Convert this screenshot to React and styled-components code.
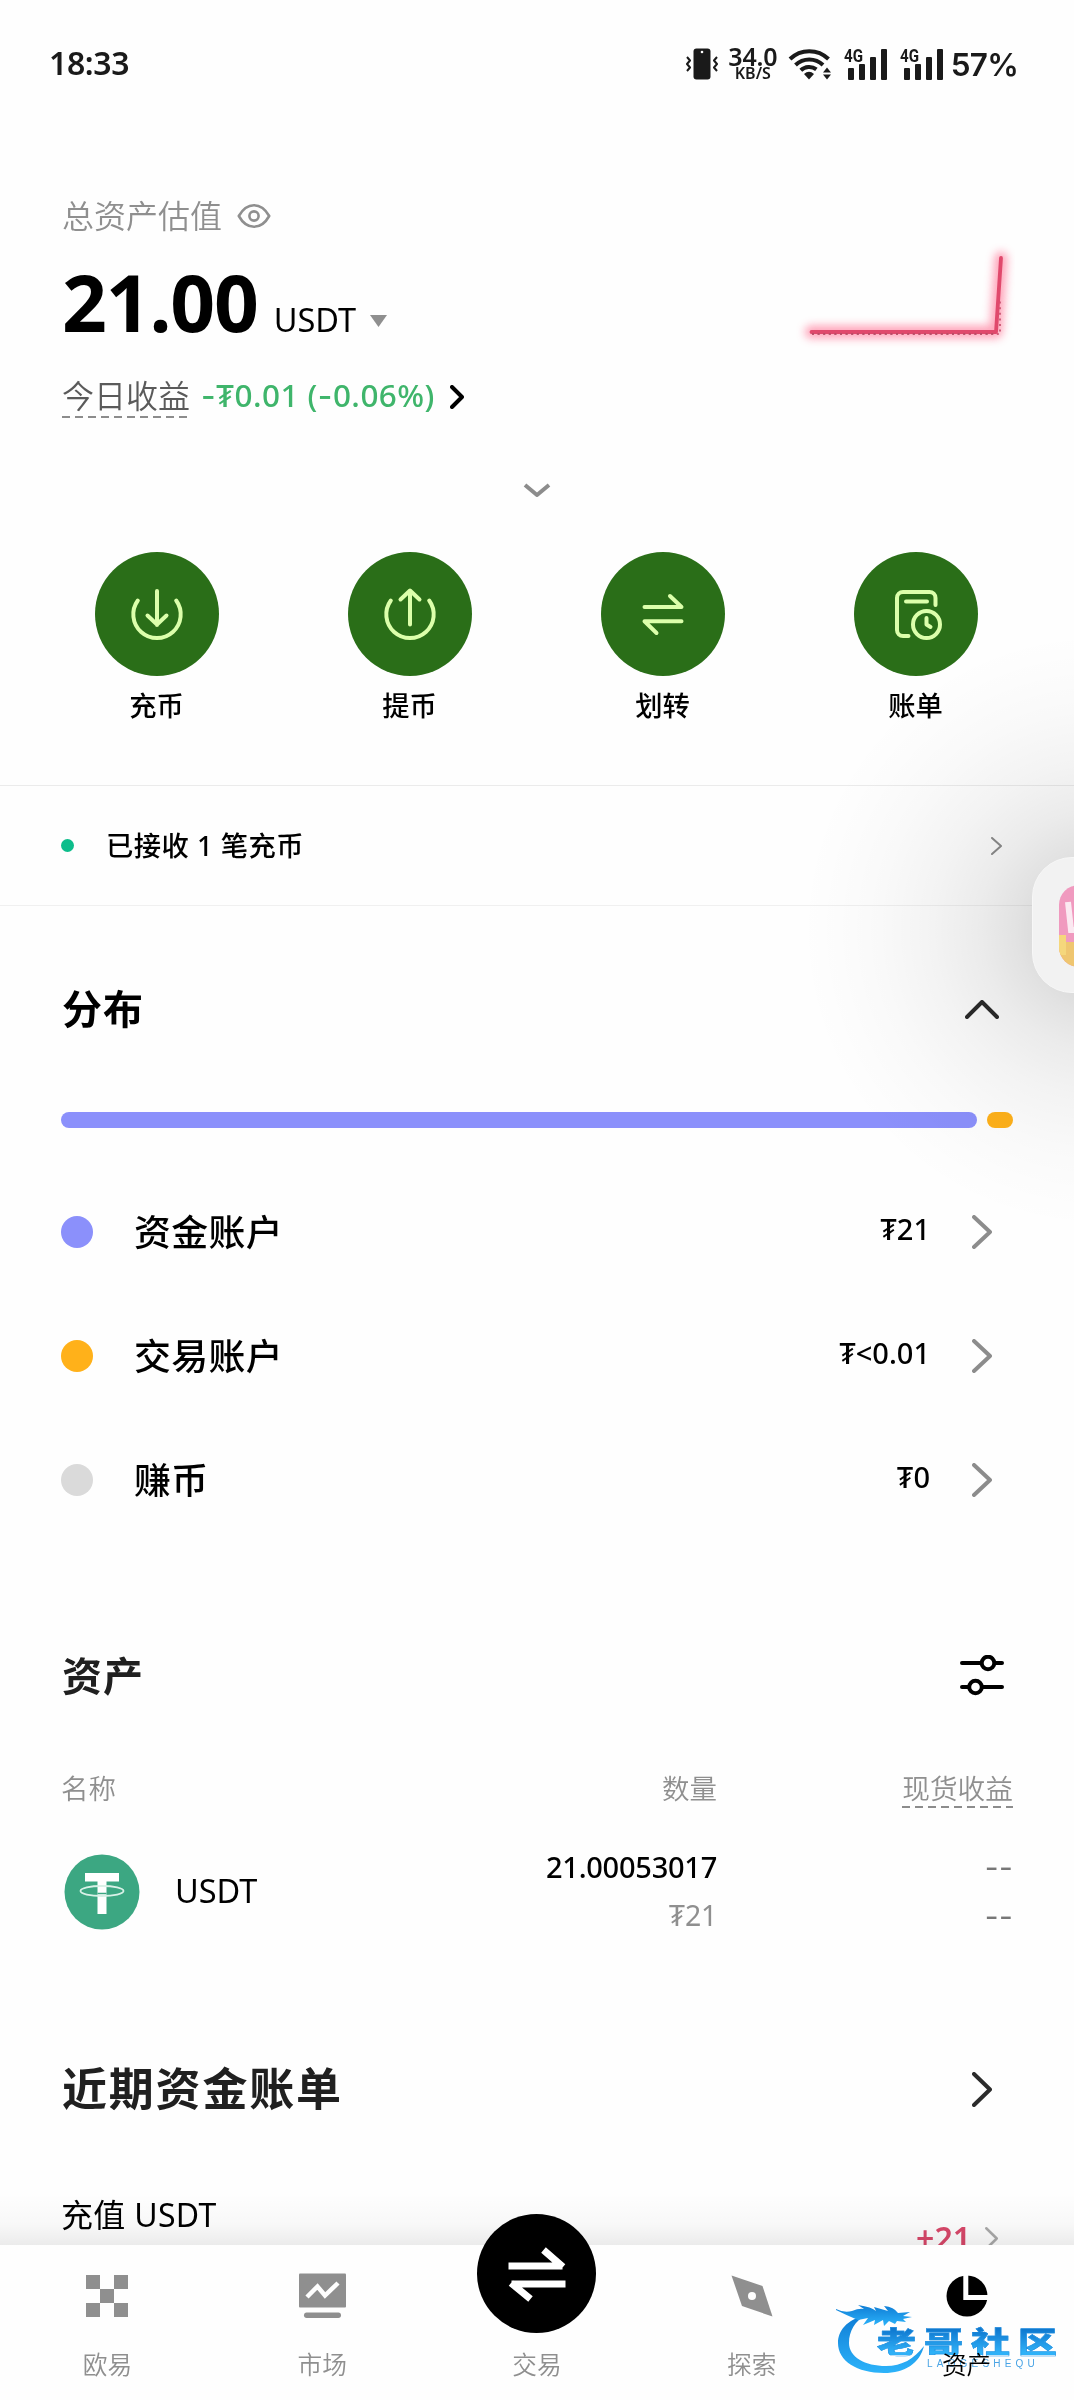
import React from 'react'
import styled, { createGlobalStyle } from 'styled-components'

const GlobalStyle = createGlobalStyle`
    * { box-sizing: border-box; }
    body {
        margin: 0;
        background: #fefefe;
        color: #000;
        font-family: "Noto Sans", "Noto Sans CJK SC", sans-serif;
    }
    svg { display: block; flex: none; }
`

const Screen = styled.div`
    position: relative;
    width: 1074px;
    height: 2400px;
    overflow: hidden;
    display: flex;
    flex-direction: column;
    background: #fefefe;
`
const StatusBar = styled.div`
    height: 128px;
    flex: none;
    padding: 0 56px 0 49px;
    display: flex;
    align-items: center;
    justify-content: space-between;
    color: #1a1a1a;
`
const Clock = styled.span`
    font-size: 32px;
    font-weight: 600;
    line-height: 40px;
    letter-spacing: -0.4px;
    padding-bottom: 2px;
`
const StatusIcons = styled.div`
    display: flex;
    align-items: center;
`
const NetSpeed = styled.div`
    width: 50px;
    margin: 0 10px;
    display: flex;
    flex-direction: column;
    align-items: center;
    font-weight: 600;
`
const SpeedValue = styled.span`
    font-size: 25px;
    line-height: 18px;
    letter-spacing: -0.2px;
`
const SpeedUnit = styled.span`
    font-size: 16px;
    line-height: 16px;
`
const Battery = styled.span`
    margin-left: 5px;
    font-family: Inter, sans-serif;
    font-size: 31.5px;
    font-weight: 600;
    line-height: 40px;
    letter-spacing: -0.8px;
    padding-top: 2px;
`

const Overview = styled.section`
    height: 289px;
    flex: none;
    padding: 0 59px 0 62px;
    display: flex;
    justify-content: space-between;
`
const Summary = styled.div`
    padding-top: 68px;
`
const Row = styled.div`
    display: flex;
    align-items: center;
`
const Label = styled.span`
    font-size: 32px;
    line-height: 40px;
    font-weight: 350;
    color: #8f8f8f;
    margin-right: 15px;
`
const AmountRow = styled.div`
    display: flex;
    align-items: baseline;
    margin-top: 18px;
    height: 96px;
`
const Amount = styled.span`
    font-size: 78.5px;
    line-height: 96px;
    font-weight: 700;
    letter-spacing: -1.2px;
`
const Unit = styled.span`
    font-size: 32.5px;
    margin: 0 14px 0 16px;
`
const PnlRow = styled(Row)`
    margin-top: 25px;
`
const Dashed = styled.span`
    display: inline-block;
    font-size: ${p => p.$size}px;
    font-weight: 350;
    line-height: ${p => p.$leading || 40}px;
    color: ${p => p.$color};
    padding-bottom: ${p => 42 - (p.$leading || 40)}px;
    background: repeating-linear-gradient(to right, #8c8c8c 0 8px, transparent 8px 13px) left ${p => p.$line}px / 100% 2px no-repeat;
`
const Pnl = styled.span`
    margin: 0 15px 0 11px;
    padding-bottom: 2px;
    font-size: 31.5px;
    font-weight: 500;
    line-height: 40px;
    letter-spacing: 0.45px;
    color: #3fb56b;
`
const Wide = styled.span`
    font-family: Inter, sans-serif;
`
const Trend = styled.svg`
    margin-top: 112px;
`
const Expand = styled.div`
    height: 135px;
    flex: none;
    padding-top: 10px;
    display: flex;
    align-items: center;
    justify-content: center;
`

const Actions = styled.div`
    display: grid;
    grid-template-columns: repeat(4, 1fr);
    padding: 0 32px 0 30px;
    flex: none;
`
const Action = styled.div`
    display: flex;
    flex-direction: column;
    align-items: center;
    gap: 12px;
    font-size: 27.3px;
    font-weight: 450;
    line-height: 36px;
`
const ActionCircle = styled.div`
    width: 124px;
    height: 124px;
    border-radius: 50%;
    background: #2a6e18;
    display: flex;
    align-items: center;
    justify-content: center;
`

const Notice = styled.div`
    height: 121px;
    flex: none;
    margin-top: 61px;
    padding: 0 72px 0 61px;
    border-top: 1px solid #ebebeb;
    border-bottom: 1px solid #f0f0f0;
    display: flex;
    align-items: center;
    font-size: 27.3px;
    font-weight: 500;
`
const NoticeText = styled.span`
    flex: 1;
    margin-left: 32px;
    padding-bottom: 3px;
    letter-spacing: 0.5px;
`
const Dot = styled.span`
    flex: none;
    width: ${p => p.$size}px;
    height: ${p => p.$size}px;
    border-radius: 50%;
    background: ${p => p.$color};
`

const Section = styled.section`
    flex: none;
    margin-top: ${p => p.$top}px;
    padding: 0 61px;
`
const SectionHead = styled.div`
    height: 60px;
    display: flex;
    align-items: center;
    justify-content: space-between;
    padding: ${p => p.$drop || 0}px ${p => p.$right}px 0 1px;
`
const Title = styled.h2`
    margin: 0;
    font-size: ${p => p.$size || 40}px;
    font-weight: 700;
    line-height: 60px;
    letter-spacing: ${p => p.$track || 1}px;
    color: ${p => p.$color || '#000'};
`
const Bars = styled.div`
    display: flex;
    gap: 10px;
    height: 16px;
    margin: 74px 0 42px;
`
const Bar = styled.div`
    border-radius: 8px;
    background: ${p => p.$color};
    flex: ${p => p.$grow ? '1' : 'none'};
    width: 26px;
`
const Account = styled.div`
    height: 124px;
    display: flex;
    align-items: center;
    padding-right: 21px;
`
const AccountName = styled.span`
    flex: 1;
    margin-left: 41px;
    padding-bottom: 4px;
    font-size: 36.9px;
    font-weight: 450;
    letter-spacing: 0.4px;
`
const AccountValue = styled.span`
    font-size: 29px;
    font-weight: 500;
    padding-bottom: 8px;
    margin-right: 42px;
`

const TableRow = styled.div`
    display: grid;
    grid-template-columns: 1fr 300px 296px;
`
const TableHead = styled(TableRow)`
    height: 40px;
    margin: 63px 0 34px;
    font-size: 27.5px;
    font-weight: 350;
    line-height: 40px;
    color: #8f8f8f;
`
const Cell = styled.div`
    display: flex;
    flex-direction: column;
    align-items: flex-end;
    font-size: 29px;
    font-weight: ${p => p.$strong ? 500 : 400};
    line-height: 48px;
    letter-spacing: -0.25px;
`
const HeadCell = styled.div`
    text-align: right;
`
const Coin = styled.div`
    display: flex;
    align-items: center;
    gap: 35px;
    padding: 0 0 1px 3px;
    font-size: 32.5px;
`
const CoinName = styled.span`
    padding-bottom: 2px;
`
const Muted = styled.span`
    color: #8f8f8f;
    font-weight: 400;
    font-size: 28.5px;
`
const Dash = styled.span`
    font-family: Inter, sans-serif;
    font-size: 30px;
    line-height: 49px;
    letter-spacing: 0.3px;
    color: #777;
`
const Entry = styled.div`
    height: 86px;
    margin-top: 76px;
    display: flex;
    align-items: center;
    padding-right: 15px;
`
const EntryName = styled.span`
    flex: 1;
    align-self: flex-start;
    font-size: 32px;
    line-height: 40px;
    letter-spacing: 0.3px;
`
const EntryAmount = styled.span`
    font-size: 32px;
    font-weight: 600;
    color: #d9486a;
    margin-right: 14px;
    padding-bottom: 1px;
`

const TabBar = styled.nav`
    position: absolute;
    left: 0;
    right: 0;
    bottom: 0;
    height: 155px;
    background: #fefefe;
    display: flex;
    &::before {
        content: '';
        position: absolute;
        left: 0;
        right: 0;
        top: -52px;
        height: 52px;
        background: linear-gradient(to bottom, rgba(0,0,0,0), rgba(0,0,0,0.025) 60%, rgba(0,0,0,0.075));
    }
`
const Tab = styled.div`
    flex: 1;
    z-index: 1;
    padding-top: 26px;
    display: flex;
    flex-direction: column;
    align-items: center;
`
const TabIcon = styled.div`
    height: 50px;
    display: flex;
    align-items: center;
`
const TabLabel = styled.span`
    margin-top: 29px;
    font-size: 24.7px;
    font-weight: 350;
    line-height: 30px;
    color: ${p => p.$active ? '#000' : '#8f8f8f'};
`
const TradeButton = styled.div`
    width: 119px;
    height: 119px;
    margin: -57px 0 -12px;
    border-radius: 50%;
    background: #000;
    display: flex;
    align-items: center;
    justify-content: center;
`

const Glow = styled.div`
    position: absolute;
    left: 800px;
    top: 630px;
    width: 600px;
    height: 600px;
    background: radial-gradient(closest-side, rgba(0,0,0,0.14) 20%, rgba(0,0,0,0.11) 28%, rgba(0,0,0,0.075) 40%, rgba(0,0,0,0.044) 56%, rgba(0,0,0,0.02) 74%, rgba(0,0,0,0.007) 88%, rgba(0,0,0,0) 100%);
    pointer-events: none;
`
const Floating = styled.div`
    position: absolute;
    left: 1032px;
    top: 857px;
    width: 136px;
    height: 136px;
    border-radius: 40px;
    border: 1px solid #f7f7f7;
    background: #f2f2f2;
    padding: 27px 26px;
`
const AppIcon = styled.div`
    width: 82px;
    height: 82px;
    border-radius: 20px;
    overflow: hidden;
`
const Watermark = styled.div`
    position: absolute;
    left: 832px;
    top: 2300px;
    width: 240px;
    height: 80px;
    z-index: 2;
    mix-blend-mode: multiply;
`
const MarkRing = styled.svg`
    position: absolute;
    left: 0;
    top: 0;
`
const MarkName = styled.span`
    position: absolute;
    left: 45px;
    top: 20px;
    font-family: "Noto Sans CJK SC", sans-serif;
    font-size: 39px;
    font-weight: 900;
    line-height: 40px;
    letter-spacing: 8px;
    white-space: nowrap;
    transform: scaleY(0.77);
    color: transparent;
    background: linear-gradient(to bottom, #0f78d0 15%, #2fb2f8 90%);
    background-clip: text;
    -webkit-text-stroke: 0.6px #2292e2;
`
const MarkLatin = styled.span`
    position: absolute;
    left: 95px;
    top: 58px;
    font-family: "Liberation Sans", sans-serif;
    font-size: 10px;
    line-height: 12px;
    letter-spacing: 4.2px;
    color: #4aa5e6;
`

const Chevron = ({ w, h, dir = 'right', stroke = 4, color = '#8c8c8c', cap = 'round' }) => {
    const s = stroke / 2
    const points = {
        right: `${s},${s} ${w - s},${h / 2} ${s},${h - s}`,
        up: `${s},${h - s} ${w / 2},${s} ${w - s},${h - s}`,
        down: `${s},${s} ${w / 2},${h - s} ${w - s},${s}`,
    }
    return (
        <svg width={w} height={h} fill="none" stroke={color} strokeWidth={stroke} strokeLinecap={cap} strokeLinejoin="round">
            <polyline points={points[dir]} />
        </svg>
    )
}

const Vibrate = () => (
    <svg width="32" height="32" viewBox="0 0 32 32">
        <rect x="7.5" y="0.5" width="17" height="31" rx="3" fill="#1a1a1a" />
        <circle cx="16" cy="4" r="1.3" fill="#fff" />
        <path d="M1 9l3 3.5-3 3.5 3 3.5-3 3.5M31 9l-3 3.5 3 3.5-3 3.5 3 3.5" fill="none" stroke="#1a1a1a" strokeWidth="2" strokeLinejoin="round" />
    </svg>
)

const Wifi = () => (
    <svg width="46" height="32" viewBox="0 0 46 32" fill="none" stroke="#1a1a1a" strokeWidth="4">
        <path d="M2 11a27.5 27.5 0 0 1 38.5 0" />
        <path d="M7.5 17a19.8 19.8 0 0 1 27.5 0" />
        <path d="M12.8 22.3a12 12 0 0 1 15.6-1" />
        <path d="M16 26q5-4.5 10 0l-5 5.5z" fill="#1a1a1a" stroke="none" />
        <path d="M35 24.5l4-5 4 5zM35 26.5h8l-4 5z" fill="#1a1a1a" stroke="none" />
    </svg>
)

const Signal = () => (
    <svg width="56" height="32" viewBox="0 0 56 32" fill="#1a1a1a" overflow="visible">
        <text x="10" y="14" fontSize="18" fontWeight="700" fontFamily="Roboto, sans-serif" textLength="19" lengthAdjust="spacingAndGlyphs">4G</text>
        <rect x="14" y="20" width="6" height="12" rx="1" />
        <rect x="25" y="16" width="6" height="16" rx="1" />
        <rect x="36" y="9" width="6" height="23" rx="1" />
        <rect x="47" y="1" width="6" height="31" rx="1" />
    </svg>
)

const Eye = () => (
    <svg width="34" height="26" viewBox="0 0 34 26" fill="none" stroke="#8f8f8f" strokeWidth="2.6">
        <path d="M1.8 13C6 5.5 11 2.2 17 2.2S28 5.5 32.2 13C28 20.5 23 23.8 17 23.8S6 20.5 1.8 13z" strokeLinejoin="round" />
        <circle cx="17" cy="13" r="4.6" />
    </svg>
)

const PnlTrend = () => (
    <Trend width="220" height="115" viewBox="795 240 220 115" fill="none">
        <defs>
            <filter id="soft" x="-20%" y="-40%" width="140%" height="180%">
                <feGaussianBlur stdDeviation="4" />
            </filter>
        </defs>
        <polyline points="811,332 996,332 1001,258" stroke="#ff86a3" strokeWidth="13" strokeLinecap="round" strokeLinejoin="round" opacity="0.75" filter="url(#soft)" />
        <path d="M812 334H1000V300" stroke="#d0607c" strokeWidth="2" strokeDasharray="2 3.6" />
        <polyline points="811.5,332 996,332 1001,258" stroke="#e0496c" strokeWidth="3.8" strokeLinecap="round" strokeLinejoin="round" />
        <path d="M812 333.8H996" stroke="#b84d66" strokeWidth="1.8" strokeDasharray="2 3.6" />
    </Trend>
)

const Deposit = () => (
    <svg width="56" height="56" viewBox="0 0 56 56" fill="none" stroke="#dcffab" strokeWidth="4" strokeLinecap="round" strokeLinejoin="round">
        <path d="M8.8 14.5a23.7 23.7 0 1 0 38.4 0" />
        <path d="M28 5v34M18.5 29.5l9.5 9 9.5-9" />
    </svg>
)

const Withdraw = () => (
    <svg width="56" height="56" viewBox="0 0 56 56" fill="none" stroke="#dcffab" strokeWidth="4" strokeLinecap="round" strokeLinejoin="round">
        <path d="M8.8 14.5a23.7 23.7 0 1 0 38.4 0" />
        <path d="M28 38.5V5M18.5 13.5l9.5-9 9.5 9" />
    </svg>
)

const Transfer = () => (
    <svg width="56" height="56" viewBox="0 0 56 56" fill="none" stroke="#dcffab" strokeWidth="4" strokeLinecap="round" strokeLinejoin="round">
        <path d="M9.5 21h37L35 10M46.5 35.3h-37L21.5 47" />
    </svg>
)

const Bills = () => (
    <svg width="56" height="56" viewBox="0 0 56 56" fill="none" stroke="#dcffab" strokeWidth="4" strokeLinecap="round" strokeLinejoin="round">
        <path d="M47.5 19v-7a6 6 0 0 0-6-6H15a6 6 0 0 0-6 6v32a6 6 0 0 0 6 6h5.5" />
        <path d="M18 15.5h21" />
        <circle cx="38.5" cy="38.5" r="13.5" />
        <path d="M38.5 32v6.5l4 2.5" />
    </svg>
)

const Sliders = () => (
    <svg width="44" height="42" viewBox="0 0 44 42" fill="#fefefe" stroke="#000" strokeWidth="4" strokeLinecap="round">
        <path d="M2 8h40M2 32h40" />
        <circle cx="28" cy="8" r="6.3" />
        <circle cx="15.5" cy="32" r="6.3" />
    </svg>
)

const Tether = () => (
    <svg width="76" height="76" viewBox="0 0 76 76">
        <circle cx="38" cy="38" r="37.5" fill="#3ca782" />
        <path d="M21 19h34v8.5H42.5V60h-9V27.5H21z" fill="#fff" />
        <ellipse cx="38" cy="37" rx="21.5" ry="5" fill="none" stroke="#d9f1e7" strokeWidth="1.8" />
        <path d="M33.5 39.5h9" stroke="#3ca782" strokeWidth="1.5" />
    </svg>
)

const OkxIcon = () => (
    <svg width="42" height="42" viewBox="0 0 42 42" fill="#8f8f8f">
        <path d="M0 0h14v14H0zM28 0h14v14H28zM14 14h14v14H14zM0 28h14v14H0zM28 28h14v14H28z" />
    </svg>
)

const MarketIcon = () => (
    <svg width="47" height="46" viewBox="0 0 47 46">
        <rect width="47" height="34" rx="1" y="0.5" fill="#8f8f8f" />
        <rect x="5" y="39.5" width="37" height="5.5" rx="2.7" fill="#8f8f8f" />
        <path d="M8 24l10.5-10.5 7.5 9L39 10" fill="none" stroke="#fefefe" strokeWidth="4.5" />
    </svg>
)

const TradeIcon = () => (
    <svg width="60" height="56" viewBox="0 0 60 56" fill="none" stroke="#fff" strokeWidth="7" strokeLinejoin="bevel">
        <path d="M1.5 20h54M56 21L36.5 4M58.5 38h-54M4 37l19.5 16" />
    </svg>
)

const ExploreIcon = () => (
    <svg width="42" height="42" viewBox="0 0 42 42">
        <path d="M0.5 0.5L31.5 11 41.5 41.5 11 31z" fill="#8f8f8f" />
        <circle cx="21" cy="21" r="4" fill="#fefefe" />
    </svg>
)

const AssetsIcon = () => (
    <svg width="42" height="42" viewBox="0 0 42 42">
        <circle cx="21" cy="21" r="20.5" fill="#000" />
        <path d="M19.8 0v22.5H42" fill="none" stroke="#fefefe" strokeWidth="5" />
    </svg>
)

const actions = [
    { name: '充币', icon: <Deposit /> },
    { name: '提币', icon: <Withdraw /> },
    { name: '划转', icon: <Transfer /> },
    { name: '账单', icon: <Bills /> },
]

const accounts = [
    { name: '资金账户', value: '₮21', color: '#8b90fb' },
    { name: '交易账户', value: '₮<0.01', color: '#ffb11a' },
    { name: '赚币', value: '₮0', color: '#dadada' },
]

const tabs = [
    { name: '欧易', icon: <OkxIcon /> },
    { name: '市场', icon: <MarketIcon /> },
    { name: '交易', trade: true },
    { name: '探索', icon: <ExploreIcon /> },
    { name: '资产', icon: <AssetsIcon />, active: true },
]

const Status = () => (
    <StatusBar>
        <Clock>18:33</Clock>
        <StatusIcons>
            <Vibrate />
            <NetSpeed>
                <SpeedValue>34.0</SpeedValue>
                <SpeedUnit>KB/S</SpeedUnit>
            </NetSpeed>
            <Wifi />
            <Signal />
            <Signal />
            <Battery>57%</Battery>
        </StatusIcons>
    </StatusBar>
)

const FloatingApp = () => (
    <Floating>
        <AppIcon>
            <svg width="82" height="82" viewBox="0 0 82 82">
                <rect width="82" height="82" fill="#f09abf" />
                <path d="M0 50h7v7h75v25H0z" fill="#efc670" />
                <path d="M0 50h7v20H0z" fill="#f5d77c" />
                <path d="M9 17l3 28h12l4-15 4 15h12l8-28" fill="none" stroke="#fbe9f1" strokeWidth="6" />
            </svg>
        </AppIcon>
    </Floating>
)

const CommunityMark = () => (
    <Watermark>
        <MarkRing width="100" height="80" viewBox="0 0 100 80">
            <defs>
                <linearGradient id="ring" x1="0" y1="0" x2="0" y2="1">
                    <stop offset="0" stopColor="#0f7ed6" />
                    <stop offset="1" stopColor="#2cb4fb" />
                </linearGradient>
            </defs>
            <path d="M34 15C14 20 6 31 6 43C6 61 25 73 52 73C73 73 88 63 92 46C82 59 70 66 54 66C33 66 17 57 17 43C17 31 23 21 34 15z" fill="url(#ring)" />
            <path d="M4 9q8 4 16 2 7-3 12-2l-6-4q14 2 18 6l-2-4 14 4-4-5q10 1 14 7l12-1-7 4 9 1-9 2 3 3-9-1-2 3-6-3-5 5-1-6-9 5 1-5-12 5 5-7-10 2q-12-5-22-10z" fill="url(#ring)" />
        </MarkRing>
        <MarkName>老哥社区</MarkName>
        <MarkLatin>LAOGESHEQU</MarkLatin>
    </Watermark>
)

const App = () => {
    return (
        <Screen>
            <GlobalStyle />
            <Status />
            <Overview>
                <Summary>
                    <Row>
                        <Label>总资产估值</Label>
                        <Eye />
                    </Row>
                    <AmountRow>
                        <Amount>21.00</Amount>
                        <Unit>USDT</Unit>
                        <svg width="17" height="17" viewBox="0 0 17 17"><path d="M0 0h17l-8.5 12z" fill="#8f8f8f" /></svg>
                    </AmountRow>
                    <PnlRow>
                        <Dashed $size={32} $color="#5a5a5a" $line={40}>今日收益</Dashed>
                        <Pnl><Wide>-</Wide>₮0.01 (<Wide>-</Wide>0.06%)</Pnl>
                        <Chevron w={14} h={24} color="#000" />
                    </PnlRow>
                </Summary>
                <PnlTrend />
            </Overview>
            <Expand>
                <Chevron w={28} h={14} dir="down" cap="butt" />
            </Expand>
            <Actions>
                {actions.map(a => (
                    <Action key={a.name}>
                        <ActionCircle>{a.icon}</ActionCircle>
                        {a.name}
                    </Action>
                ))}
            </Actions>
            <Notice>
                <Dot $size={13} $color="#0dbd8b" />
                <NoticeText>已接收 1 笔充币</NoticeText>
                <Chevron w={11} h={18} stroke={2} />
            </Notice>

            <Section $top={72}>
                <SectionHead $right={14} $drop={2}>
                    <Title>分布</Title>
                    <Chevron w={34} h={19} dir="up" color="#2b2b2b" />
                </SectionHead>
                <Bars>
                    <Bar $grow $color="#8b90fb" />
                    <Bar $color="#ffb11a" />
                </Bars>
                {accounts.map(a => (
                    <Account key={a.name}>
                        <Dot $size={32} $color={a.color} />
                        <AccountName>{a.name}</AccountName>
                        <AccountValue>{a.value}</AccountValue>
                        <Chevron w={20} h={34} />
                    </Account>
                ))}
            </Section>

            <Section $top={104}>
                <SectionHead $right={9}>
                    <Title $color="#202020">资产</Title>
                    <Sliders />
                </SectionHead>
                <TableHead>
                    <div>名称</div>
                    <HeadCell>数量</HeadCell>
                    <HeadCell><Dashed $size={27.7} $color="#8f8f8f" $line={37} $leading={38}>现货收益</Dashed></HeadCell>
                </TableHead>
                <TableRow>
                    <Coin>
                        <Tether />
                        <CoinName>USDT</CoinName>
                    </Coin>
                    <Cell $strong>
                        21.00053017
                        <Muted>₮21</Muted>
                    </Cell>
                    <Cell>
                        <Dash>--</Dash>
                        <Dash>--</Dash>
                    </Cell>
                </TableRow>
            </Section>

            <Section $top={118}>
                <SectionHead $right={21}>
                    <Title $size={45} $track={1.8} $color="#202020">近期资金账单</Title>
                    <Chevron w={20} h={35} color="#2b2b2b" />
                </SectionHead>
                <Entry>
                    <EntryName>充值 USDT</EntryName>
                    <EntryAmount>+21</EntryAmount>
                    <Chevron w={13} h={23} stroke={2.5} color="#aaa" />
                </Entry>
            </Section>

            <Glow />
            <FloatingApp />
            <TabBar>
                {tabs.map(t => (
                    <Tab key={t.name}>
                        {t.trade
                            ? <TradeButton><TradeIcon /></TradeButton>
                            : <TabIcon>{t.icon}</TabIcon>}
                        <TabLabel $active={t.active}>{t.name}</TabLabel>
                    </Tab>
                ))}
            </TabBar>
            <CommunityMark />
        </Screen>
    )
}

export default App
